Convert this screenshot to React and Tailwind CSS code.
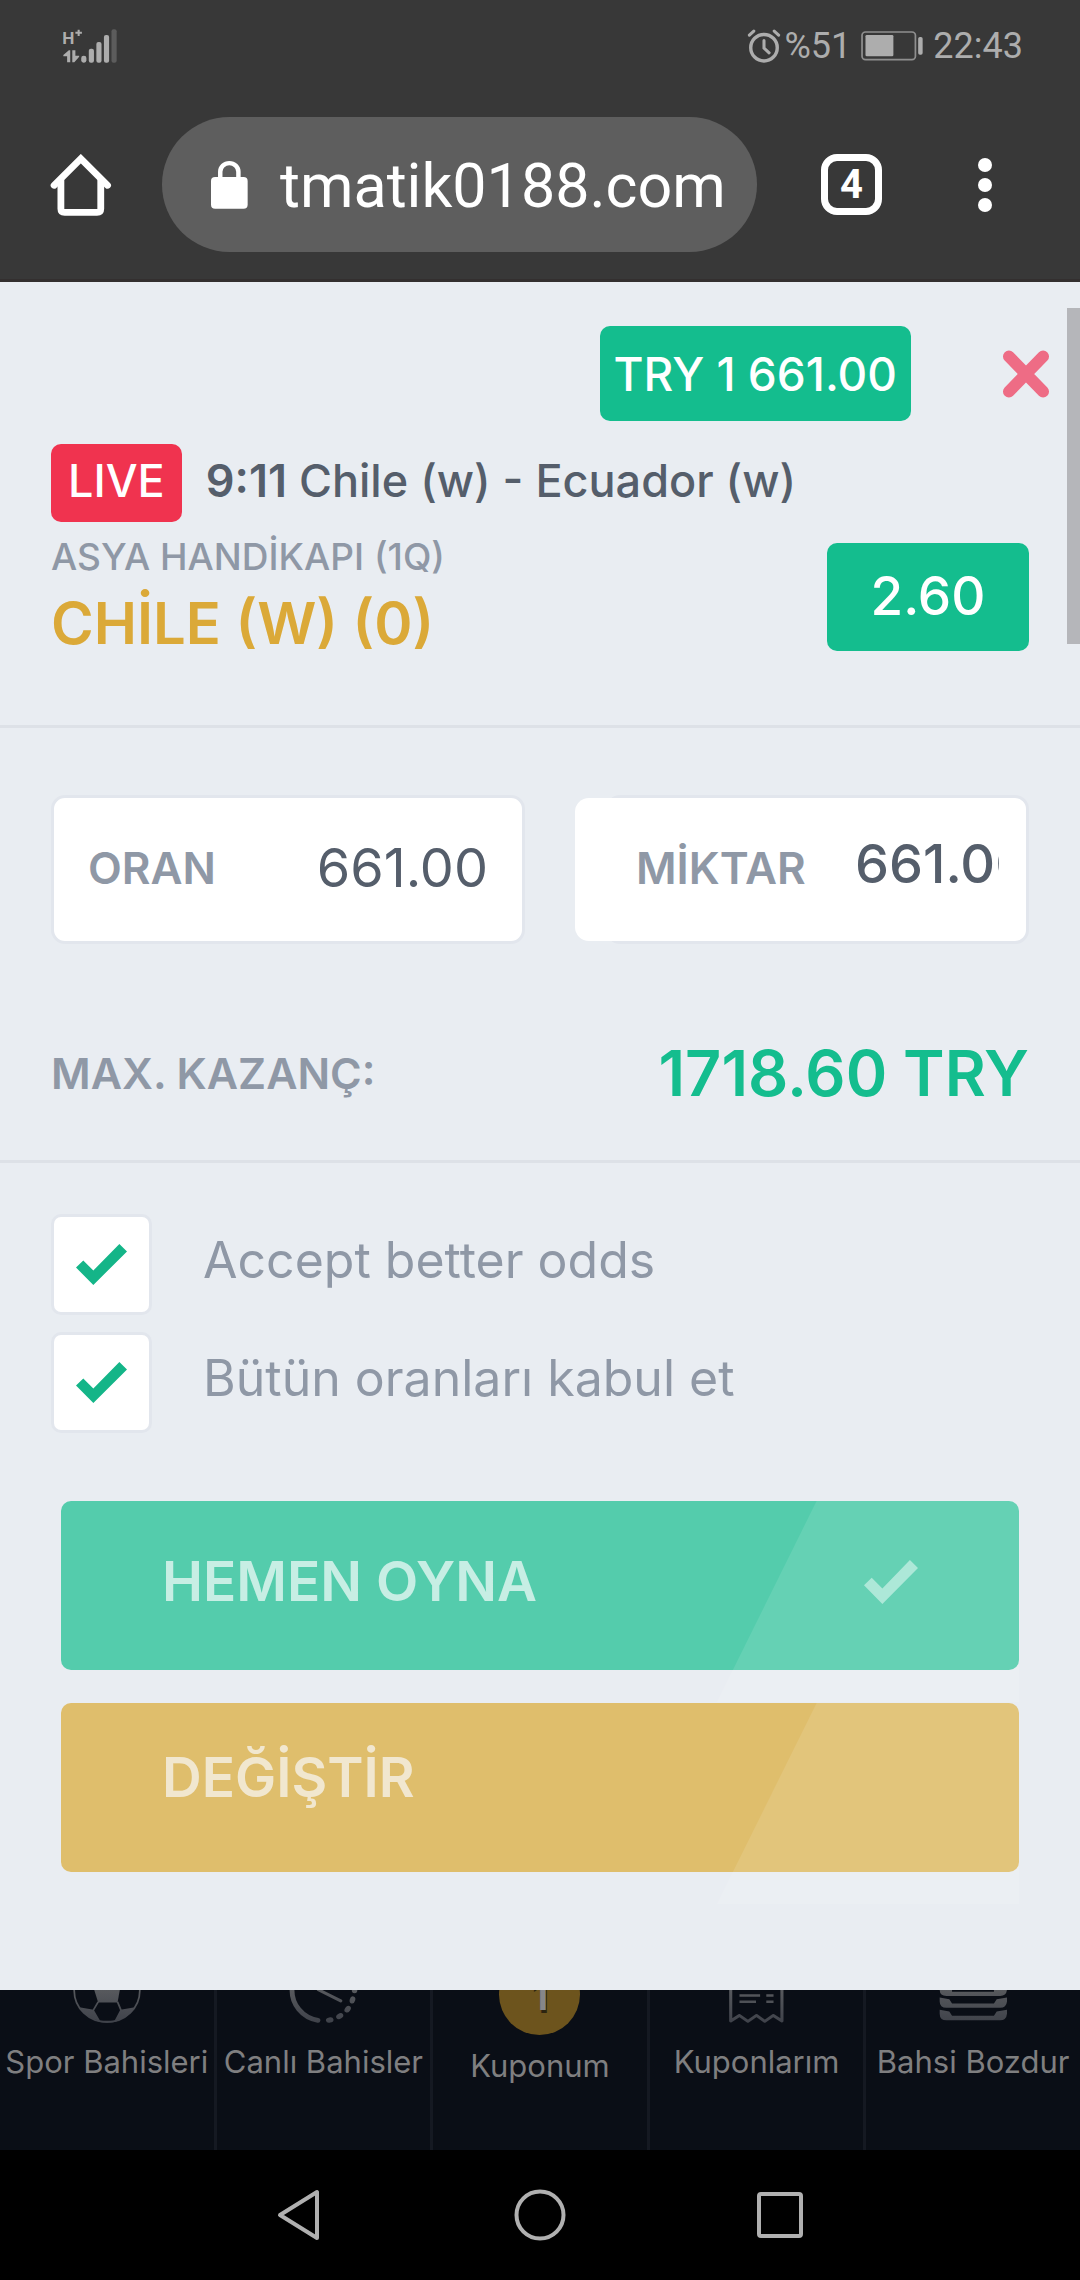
import React, { useState } from 'react';

function SignalIcon() {
  return (
    <svg viewBox="182 83 157 102" preserveAspectRatio="none" className="h-[34px] w-[54px]" fill="#adadad" role="img" aria-label="H+">
      <text x="180" y="127" fontSize="50" fontWeight="700" fontFamily="Roboto, sans-serif">H</text>
      <path d="M218 94h19M227.500 85v19" stroke="#adadad" strokeWidth="6" />
      <path d="M203 147v36h-9v-18h-11v-4l16-14zM209 147h9v16h11v3l-14 17h-6z" />
      <rect x="235" y="163" width="15" height="21" rx="7" />
      <rect x="257" y="142" width="15" height="42" rx="6" />
      <rect x="279" y="122" width="15" height="62" rx="6" />
      <rect x="301" y="101" width="15" height="83" rx="6" />
      <rect x="323" y="84" width="15" height="100" rx="6" fill="#5c5c5c" />
    </svg>
  );
}

function AlarmIcon() {
  return (
    <svg viewBox="603 86 98 100" className="h-[34px] w-[34px]" fill="none" stroke="#adadad" strokeWidth="10" strokeLinecap="round" aria-hidden="true">
      <circle cx="652" cy="141" r="39" />
      <path d="M609 104l13-12M695 104l-13-12M652 120v22l15 14" strokeWidth="9" />
    </svg>
  );
}

function BatteryIcon() {
  return (
    <svg viewBox="935 92 180 90" preserveAspectRatio="none" className="h-[30px] w-[62px]" fill="none" aria-hidden="true">
      <rect x="938" y="95" width="155" height="83" rx="10" stroke="#8f8f8f" strokeWidth="5" />
      <rect x="948" y="104" width="81" height="64" rx="4" fill="#adadad" />
      <rect x="1101" y="110" width="13" height="53" rx="5" fill="#adadad" />
    </svg>
  );
}

function HomeIcon() {
  return (
    <svg viewBox="146 460 182 186" preserveAspectRatio="none" className="h-[62px] w-[62px]" fill="none" stroke="#fff" strokeWidth="20" strokeLinecap="round" aria-hidden="true">
      <path d="M158 554l78.500-80 78.500 80" />
      <path d="M178 540v84q0 11 11 11h95q11 0 11-11v-84" />
    </svg>
  );
}

function LockIcon() {
  return (
    <svg viewBox="613 478 108 144" preserveAspectRatio="none" className="h-12 w-[37px] shrink-0" aria-hidden="true">
      <rect x="613" y="526" width="107" height="95" rx="12" fill="#fff" />
      <path d="M640 530v-20a26 25 0 0 1 53 0v20" fill="none" stroke="#fff" strokeWidth="13" />
    </svg>
  );
}

function Check({ className }) {
  return (
    <svg viewBox="226 157 147 122" preserveAspectRatio="none" className={className} aria-hidden="true">
      <path d="M226 227l21-21 29 30 75-79 22 22-97 100z" fill="currentColor" />
    </svg>
  );
}

function IconFade({ id }) {
  return (
    <linearGradient id={id} x1="0" y1="90" x2="0" y2="190" gradientUnits="userSpaceOnUse">
      <stop offset="0" stopColor="#57595d" />
      <stop offset="1" stopColor="#3f424a" />
    </linearGradient>
  );
}

function BallIcon() {
  return (
    <svg viewBox="211 90 197 100" preserveAspectRatio="none" className="h-[33px] w-[68px]" aria-hidden="true">
      <defs><IconFade id="ball" /></defs>
      <g fill="url(#ball)" stroke="url(#ball)">
        <circle cx="309.500" cy="92" r="95" fill="none" strokeWidth="5" />
        <path d="M272 88h75l-7 40h-56z" stroke="none" />
        <path d="M284 126l-14 25M340 126l10 25" strokeWidth="5" />
        <path d="M229 142l42 8 19 34q-40-8-61-42zM391 142l-43 8-17 34q40-8 60-42z" stroke="none" />
        <path d="M282 183q28 4 56 0-28 10-56 0z" strokeWidth="3" />
      </g>
    </svg>
  );
}

function LiveIcon() {
  return (
    <svg viewBox="840 90 200 100" preserveAspectRatio="none" className="h-[33px] w-[69px]" aria-hidden="true">
      <defs><IconFade id="live" /></defs>
      <g fill="none" stroke="url(#live)" strokeLinecap="round">
        <path d="M849 86a92 92 0 0 0 75 96" strokeWidth="14" />
        <path d="M925 89l65 34" strokeWidth="9" />
      </g>
      <g fill="url(#live)">
        <ellipse cx="1030" cy="91" rx="8" ry="9" />
        <ellipse cx="1024" cy="120" rx="8" ry="11" transform="rotate(15 1024 120)" />
        <ellipse cx="1010" cy="148" rx="8" ry="11" transform="rotate(35 1010 148)" />
        <ellipse cx="987" cy="169" rx="8" ry="11" transform="rotate(55 987 169)" />
        <ellipse cx="958" cy="181" rx="11" ry="8" transform="rotate(-12 958 181)" />
      </g>
    </svg>
  );
}

function ReceiptIcon() {
  return (
    <svg viewBox="548 90 160 100" preserveAspectRatio="none" className="h-[33px] w-[55px]" fill="none" stroke="url(#receipt)" strokeLinecap="round" aria-hidden="true">
      <defs><IconFade id="receipt" /></defs>
      <path d="M553 80v104l25-17 25 18 25-18 24 18 25-18 25 17V80" strokeWidth="9" strokeLinejoin="round" />
      <path d="M582 106h53v1h-53zM660 106h14v1h-14zM582 125h41v1h-41zM660 125h14v1h-14z" strokeWidth="7" />
    </svg>
  );
}

function StackIcon() {
  return (
    <svg viewBox="1158 90 198 100" preserveAspectRatio="none" className="h-[33px] w-[68px]" fill="url(#stack)" aria-hidden="true">
      <defs><IconFade id="stack" /></defs>
      <path d="M1160 75h36v20h122v-20h38v14q-2 19-20 19h-156q-20 0-20-19z" />
      <path d="M1160 113l28 5 8 13h122l8-13 30-5v12q-2 19-20 19h-156q-20 0-20-19z" />
      <path d="M1160 150l28 5 8 13h122l8-13 30-5v12q-2 20-20 20h-156q-20 0-20-20z" />
    </svg>
  );
}

function CouponBadge() {
  return (
    <span className="grid size-[81px] shrink-0 place-items-center rounded-full bg-[#6d541d] text-[42px] font-semibold leading-none text-[#86878a] [text-shadow:1px_3px_0_#2c2410]">
      1
    </span>
  );
}

const tabs = [
  { label: 'Spor Bahisleri', icon: <BallIcon /> },
  { label: 'Canlı Bahisler', icon: <LiveIcon /> },
  { label: 'Kuponum', icon: <CouponBadge />, active: true },
  { label: 'Kuponlarım', icon: <ReceiptIcon /> },
  { label: 'Bahsi Bozdur', icon: <StackIcon /> },
];

function Option({ label }) {
  const [on, setOn] = useState(true);
  return (
    <label className="flex items-start gap-[51px] text-[50px] leading-[93px] text-[#8f98a6]">
      <span className="grid shrink-0 place-items-center">
        <input
          type="checkbox"
          checked={on}
          onChange={() => setOn(!on)}
          className="col-start-1 row-start-1 size-[101px] appearance-none rounded-[10px] border-3 border-[#e2e6ed] bg-white"
        />
        {on && <Check className="pointer-events-none z-10 col-start-1 row-start-1 h-[41px] w-[51px] text-[#14b588]" />}
      </span>
      {label}
    </label>
  );
}

function Shine() {
  return (
    <span
      aria-hidden="true"
      className="pointer-events-none absolute -bottom-8 right-0 top-0 w-[302px] rounded-t-[10px] bg-white/10 [clip-path:polygon(33%_0,100%_0,100%_100%,0_100%)]"
    />
  );
}

export default function App() {
  const [stake, setStake] = useState('661.00');
  return (
    <div className="flex w-full flex-col bg-black font-['Inter','Liberation_Sans',sans-serif]">
      <header className="border-b-3 border-[#332f2f] bg-[#383838] font-['Roboto','Liberation_Sans',sans-serif]">
        <div className="flex h-[92px] items-center justify-between pl-[63px] pr-[57px] text-[36px] leading-none text-[#adadad]">
          <SignalIcon />
          <div className="flex items-center">
            <AlarmIcon />
            <span className="ml-1">%51</span>
            <span className="mx-2.5"><BatteryIcon /></span>
            <span>22:43</span>
          </div>
        </div>
        <div className="flex items-center pb-[27px] pl-[50px] pr-[88px] pt-[25px]">
          <button type="button" aria-label="Home"><HomeIcon /></button>
          <div className="ml-[50px] flex h-[135px] min-w-0 flex-1 items-center gap-8 rounded-full bg-[#5e5e5e] pl-[49px] pr-5">
            <LockIcon />
            <input
              aria-label="Address"
              defaultValue="tmatik0188.com"
              className="h-20 min-w-0 flex-1 bg-transparent pt-1 text-[61px] text-white outline-none"
            />
          </div>
          <button type="button" aria-label="4 tabs" className="ml-16 grid size-[61px] place-items-center rounded-[16px] border-[7px] border-white text-[40px] font-bold leading-none text-white">
            4
          </button>
          <button type="button" aria-label="Menu" className="ml-24 flex flex-col gap-1.5">
            <span className="size-3.5 rounded-full bg-white" />
            <span className="size-3.5 rounded-full bg-white" />
            <span className="size-3.5 rounded-full bg-white" />
          </button>
        </div>
      </header>

      <main className="relative bg-[#e9edf2]">
        <div aria-hidden="true" className="absolute right-0 top-[26px] h-[336px] w-[13px] bg-[#b5b6ba]" />

        <section className="border-b-3 border-[#dde1e7] pb-[62px] pl-[51px] pt-11">
          <div className="flex items-center justify-end gap-[91px] pr-[30px]">
            <button type="button" className="h-[95px] rounded-[10px] bg-[#14bd8e] px-3.5 pt-0.5 text-[46px] font-medium text-white">TRY 1 661.00</button>
            <button type="button" aria-label="Kapat">
              <svg viewBox="0 0 48 49" className="size-12" fill="none" stroke="#ee6c85" strokeWidth="12" strokeLinecap="round" aria-hidden="true">
                <path d="M6.500 6.500l35 36M41.500 6.500l-35 36" />
              </svg>
            </button>
          </div>
          <div className="mt-[23px] flex items-center gap-6">
            <span className="flex h-[78px] items-center rounded-[10px] bg-[#f0334f] px-[17px] pb-1 text-[45px] font-medium text-white">LIVE</span>
            <h1 className="whitespace-nowrap pb-1 text-[45px] font-medium text-[#555e6b]">
              <b className="font-semibold">9:11</b> Chile (w) - Ecuador (w)
            </h1>
          </div>
          <div className="mt-2 flex items-center justify-between pr-[51px]">
            <div>
              <p className="text-[37px] font-medium leading-[54px] text-[#8f98a6]">ASYA HANDİKAPI (1Q)</p>
              <p className="text-[58px] font-semibold leading-[79px] text-[#dba938]">CHİLE (W) (0)</p>
            </div>
            <button type="button" className="h-[108px] w-[202px] rounded-[10px] bg-[#14bd8e] text-[53px] font-medium text-white">2.60</button>
          </div>
        </section>

        <section className="border-b-3 border-[#dde1e7] px-[51px] pb-[45px] pt-[67px]">
          <div className="grid grid-cols-[474fr_454fr] gap-[50px]">
            <label className="flex h-[149px] min-w-0 items-center justify-between rounded-[14px] border-3 border-[#e2e6ed] bg-white px-[34px] pb-1">
              <span className="text-[44px] font-semibold text-[#8f98a6]">ORAN</span>
              <input readOnly value="661.00" className="h-20 w-[180px] bg-transparent text-right text-[54px] text-[#555e6b] outline-none" />
            </label>
            <label className="relative flex h-[149px] min-w-0 py-[3px]">
              <span aria-hidden="true" className="absolute inset-y-0 left-[31px] right-0 rounded-[14px] border-3 border-[#e2e6ed] bg-white" />
              <span className="relative flex flex-1 items-center rounded-l-[14px] bg-white pb-1 pl-[61px] text-[44px] font-semibold text-[#8f98a6]">MİKTAR</span>
              <input
                value={stake}
                onChange={(e) => setStake(e.target.value)}
                className="relative mr-[30px] h-[130px] w-36 bg-transparent text-[54px] font-medium text-[#555e6b] outline-none"
              />
            </label>
          </div>
          <div className="mt-[87px] flex h-[84px] items-center justify-between">
            <span className="text-[43px] font-semibold text-[#8f98a6]">MAX. KAZANÇ:</span>
            <output className="text-[63px] font-semibold text-[#14bd8e]">1718.60 TRY</output>
          </div>
        </section>

        <section className="px-[51px] pb-[118px] pt-[51px]">
          <div className="flex flex-col gap-[17px]">
            <Option label="Accept better odds" />
            <Option label="Bütün oranları kabul et" />
          </div>
          <div className="mt-[68px] flex flex-col gap-[33px] px-2.5">
            <button type="button" className="relative flex h-[169px] items-center justify-between rounded-[10px] bg-[#54ccac] pb-2 pl-[101px] pr-[101px] text-[55px] font-semibold text-[#c7eee4]">
              HEMEN OYNA
              <Shine />
              <Check className="relative h-[44px] w-[54px] text-[#ade8d8]" />
            </button>
            <button type="button" className="relative flex h-[169px] items-center rounded-[10px] bg-[#dfbe6c] pb-5 pl-[101px] text-[55px] font-semibold text-[#f1e7cf]">
              DEĞİŞTİR
              <Shine />
            </button>
          </div>
        </section>
      </main>

      <nav className="flex bg-[#0a0e16]">
        {tabs.map((t, i) => (
          <a
            key={t.label}
            href="#"
            className={
              'flex min-w-0 flex-1 flex-col items-center whitespace-nowrap text-[31px] leading-[48px] text-[#7f7f80] ' +
              (i < 4 ? 'border-r-3 border-[#151922]' : '')
            }
          >
            <span className={t.active ? 'flex h-[45px] items-end overflow-hidden' : 'flex h-[33px] items-end overflow-hidden'}>{t.icon}</span>
            <span className={t.active ? 'mb-[60px] mt-[7px]' : 'mb-16 mt-[15px]'}>{t.label}</span>
          </a>
        ))}
      </nav>

      <div className="mx-auto grid w-2/3 grid-cols-3 place-items-center py-[39px]">
        <button type="button" aria-label="Back">
          <svg viewBox="0 0 52 52" className="size-[52px]" fill="none" stroke="#b0b0b0" strokeWidth="4" strokeLinejoin="round" aria-hidden="true">
            <path d="M6 26L43 3v46z" />
          </svg>
        </button>
        <button type="button" aria-label="Home screen">
          <svg viewBox="0 0 52 52" className="size-[52px]" fill="none" stroke="#b0b0b0" strokeWidth="4" aria-hidden="true">
            <circle cx="26" cy="26" r="23.500" />
          </svg>
        </button>
        <button type="button" aria-label="Recent apps">
          <svg viewBox="0 0 52 52" className="size-[52px]" fill="none" stroke="#b0b0b0" strokeWidth="4" aria-hidden="true">
            <rect x="5" y="5" width="42" height="42" rx="2" />
          </svg>
        </button>
      </div>
    </div>
  );
}
